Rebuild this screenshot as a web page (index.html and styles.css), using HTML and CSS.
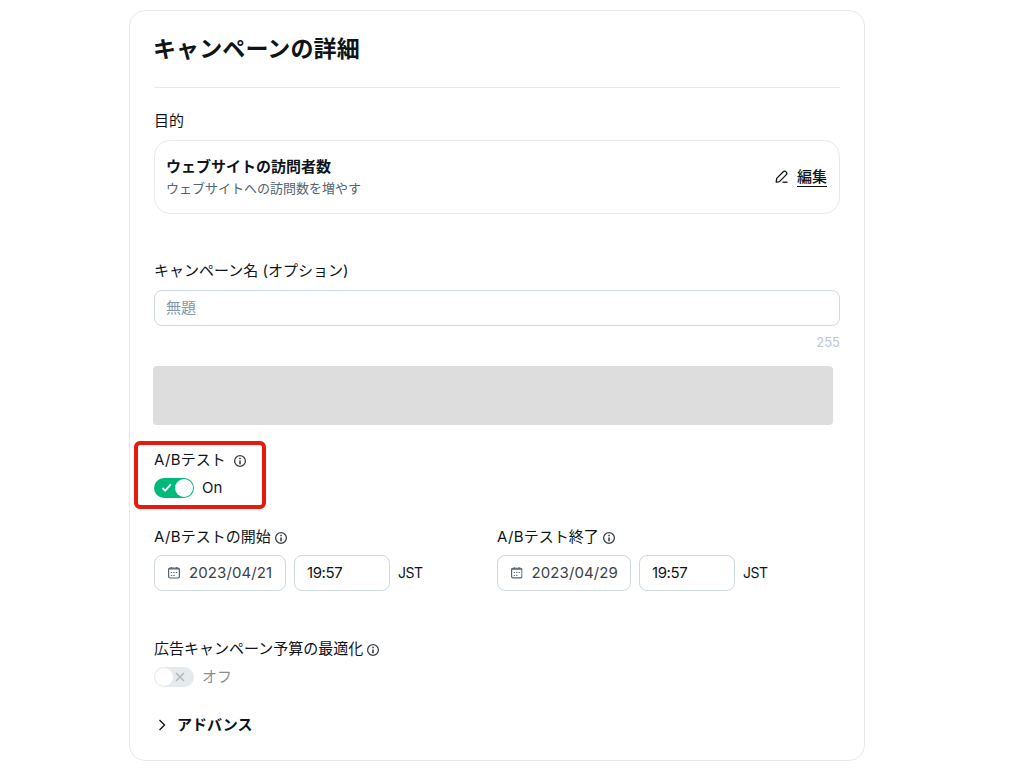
FILE: index.html
```html
<!DOCTYPE html>
<html lang="ja">
<head>
    <meta charset="UTF-8">
    <meta name="viewport" content="width=device-width, initial-scale=1.0">
    <title>キャンペーンの詳細</title>
    <link rel="stylesheet" href="styles.css">
</head>
<body>
    <!-- Shared icons -->
    <svg class="sprite">
        <symbol id="info" viewBox="0 0 14 14">
            <circle cx="7" cy="7" r="5.4" fill="none" stroke="currentColor" stroke-width="1.3"/>
            <path d="M6.2 3.8h1.6v1.5H6.2zM6.2 6.4h1.6v3.8H6.2z" fill="currentColor"/>
        </symbol>
        <symbol id="calendar" viewBox="0 0 12 12">
            <rect x="0.6" y="1.1" width="10.8" height="9.9" rx="1.4" fill="none" stroke="currentColor" stroke-width="1.2"/>
            <path d="M3.5 0v2M8.5 0v2M.6 2h10.8" stroke="currentColor" stroke-width="1.2" fill="none"/>
            <path d="M5.3 5.5h1.4M7.8 5.5h1.4M2.8 8.5h1.4M5.3 8.5h1.4M2.8 5.5h1.4" stroke="currentColor" stroke-width="1"/>
        </symbol>
    </svg>

    <div class="card">
        <h1>キャンペーンの詳細</h1>

        <div class="label objective-label">目的</div>
        <div class="objective">
            <div class="objective-info">
                <div class="objective-title">ウェブサイトの訪問者数</div>
                <div class="objective-text">ウェブサイトへの訪問数を増やす</div>
            </div>
            <a class="edit">
                <svg width="14" height="14" viewBox="0 0 14 14" fill="none" stroke="currentColor" stroke-width="1.3" stroke-linejoin="round">
                    <path d="M1.2 12.2l.5-3.8L8 2c1-1 2.2-1 3.1-.1.9.9.9 2.1 0 3L5 11.1c-.8.8-2 1.1-3.800 1.1z"/>
                    <path d="M7.5 12.2h5"/>
                </svg>
                <span>編集</span>
            </a>
        </div>

        <div class="label name-label">キャンペーン名 (オプション)</div>
        <input class="field name-field" type="text" placeholder="無題">
        <div class="counter">255</div>

        <div class="placeholder"></div>

        <div class="ab-test">
            <div class="label"><span class="latin">A/B</span>テスト <svg class="info"><use href="#info"/></svg></div>
            <div class="switch-row">
                <span class="switch on">
                    <svg width="12" height="10" viewBox="0 0 12 10" fill="none" stroke="#fff" stroke-width="1.8"><path d="M1.4 5l2.8 2.7L9.8 1.4"/></svg>
                </span>
                <span class="switch-text">On</span>
            </div>
        </div>

        <div class="dates">
            <div class="date-col">
                <div class="label"><span class="latin">A/B</span>テストの開始<svg class="info"><use href="#info"/></svg></div>
                <div class="date-row">
                    <div class="field date"><svg class="calendar"><use href="#calendar"/></svg>2023/04/21</div>
                    <div class="field time">19:57</div>
                    <span class="zone">JST</span>
                </div>
            </div>
            <div class="date-col end">
                <div class="label"><span class="latin">A/B</span>テスト終了<svg class="info"><use href="#info"/></svg></div>
                <div class="date-row">
                    <div class="field date"><svg class="calendar"><use href="#calendar"/></svg>2023/04/29</div>
                    <div class="field time">19:57</div>
                    <span class="zone">JST</span>
                </div>
            </div>
        </div>

        <div class="label budget-label">広告キャンペーン予算の最適化<svg class="info"><use href="#info"/></svg></div>
        <div class="switch-row">
            <span class="switch off">
                <svg width="10" height="10" viewBox="0 0 10 10" stroke="#b3b7b9" stroke-width="1.5"><path d="M1 1l8 8M9 1L1 9"/></svg>
            </span>
            <span class="switch-text muted">オフ</span>
        </div>

        <div class="advanced">
            <svg width="8" height="12" viewBox="0 0 8 12" fill="none" stroke="currentColor" stroke-width="1.4"><path d="M1.5 1l5 5-5 5"/></svg>
            <span>アドバンス</span>
        </div>
    </div>
</body>
</html>
```

FILE: styles.css
```css
* {
    box-sizing: border-box;
}

body {
    margin: 0;
    padding: 10px 0 0 129px;
    background: #fff;
    color: #0f1419;
    font-family: Inter, "Noto Sans CJK JP", sans-serif;
    font-size: 15px;
    line-height: 20px;
}

.sprite {
    display: none;
}

.card {
    width: 736px;
    height: 751px;
    padding: 24px;
    border: 1px solid #e6eaeb;
    border-radius: 16px;
}

h1 {
    margin: 0;
    padding-bottom: 24px;
    border-bottom: 1px solid #e6eaeb;
    font-size: 23px;
    font-weight: 600;
    line-height: 28px;
    letter-spacing: 0.1px;
    text-indent: -1px;
}

.label {
    display: flex;
    align-items: center;
    height: 20px;
    margin-bottom: 8px;
    white-space: pre;
}

.latin {
    letter-spacing: 0.3px;
}

.info {
    width: 14px;
    height: 14px;
    margin: 2px 0 0 3px;
    color: #3c4248;
}

.objective-label {
    margin-top: 23px;
    margin-bottom: 9px;
}

.objective {
    display: flex;
    justify-content: space-between;
    align-items: center;
    height: 74px;
    padding: 0 12px 0 11px;
    border: 1px solid #e6eaeb;
    border-radius: 16px;
}

.objective-info {
    padding-bottom: 2px;
}

.objective-title {
    font-weight: 600;
    line-height: 23px;
}

.objective-text {
    color: #536471;
    font-size: 13px;
}

.edit {
    display: flex;
    align-items: center;
    gap: 8px;
    font-weight: 500;
}

.edit span {
    border-bottom: 1px solid #0f1419;
    line-height: 19px;
}

.name-label {
    margin-top: 47px;
    margin-bottom: 9px;
}

.field {
    display: flex;
    align-items: center;
    height: 36px;
    padding: 0 12px;
    border: 1px solid #cfd9de;
    border-radius: 8px;
}

.name-field {
    width: 100%;
    padding: 0 11px 2px;
    color: inherit;
    font: inherit;
}

.name-field::placeholder {
    color: #829aab;
    opacity: 1;
}

.counter {
    margin-top: 6px;
    color: #b9c8d3;
    font-size: 13px;
    text-align: right;
}

.placeholder {
    width: 680px;
    height: 59px;
    margin: 14px 0 0 -1px;
    border-radius: 4px;
    background: #ddd;
}

/* Red frame around the A/B test switch */
.ab-test {
    width: 132px;
    height: 68px;
    margin: 16px 0 0 -20px;
    padding: 5px 0 0 16px;
    border: 4px solid #e71a0f;
    border-radius: 6px;
}

.switch-row {
    display: flex;
    align-items: center;
    gap: 8px;
    height: 20px;
}

.switch {
    display: flex;
    align-items: center;
    width: 40px;
    height: 20px;
    padding: 1px;
    border-radius: 10px;
}

.switch::before {
    content: "";
    width: 18px;
    height: 18px;
    border-radius: 50%;
    background: #fff;
}

.switch.on {
    flex-direction: row-reverse;
    justify-content: space-between;
    padding-left: 7px;
    background: #00ba7c;
}

.switch.off {
    gap: 2px;
    background: #e5eaec;
}

.muted {
    color: #8b8f91;
}

.dates {
    display: flex;
    margin-top: 18px;
}

.date-col {
    width: 343px;
}

.date-row {
    display: flex;
    align-items: center;
    gap: 8px;
}

.date {
    width: 132px;
    padding-left: 13px;
    color: #3c4248;
    letter-spacing: 0.1px;
}

.end .date {
    width: 134px;
}

.calendar {
    width: 12px;
    height: 12px;
    margin-right: 9px;
    color: #536471;
}

.time {
    width: 96px;
    letter-spacing: -0.4px;
}

.zone {
    font-size: 14px;
    letter-spacing: -0.5px;
}

.budget-label {
    margin-top: 48px;
}

.advanced {
    display: flex;
    align-items: center;
    gap: 11px;
    margin-top: 28px;
    padding-left: 4px;
    font-weight: 600;
}
```
